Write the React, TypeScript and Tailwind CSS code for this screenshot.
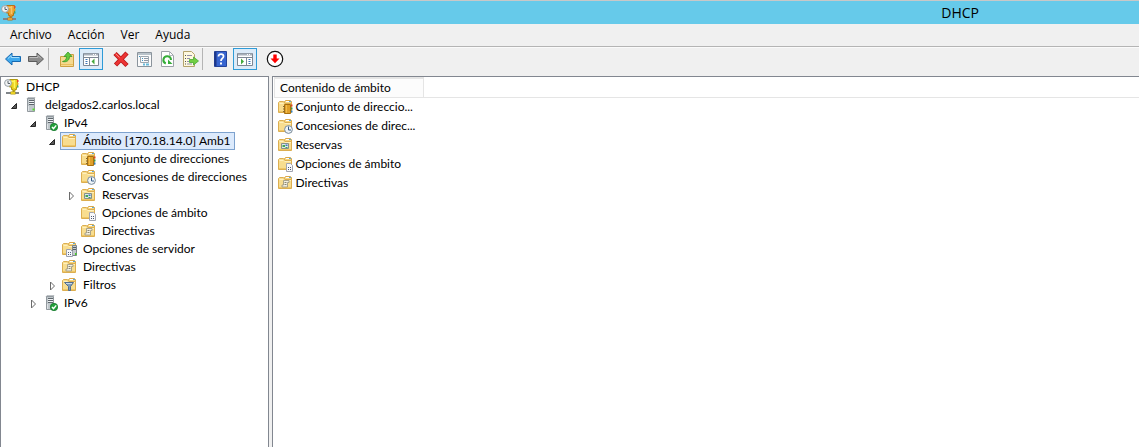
import React from "react";

type IconName =
  | "app" | "dhcp" | "server" | "serverOk" | "folder" | "pool" | "leases"
  | "reservations" | "options" | "policies" | "serverOptions" | "filters";

function FolderBase() {
  return (
    <>
      <path d="M7.500 3.500v-1l1-1h5l1 1V6h-7z" fill="#f6d580" stroke="#dba94a" />
      <path d="M9 2.500h3" stroke="#fff" />
      <path d="M12 2.500h2" stroke="#5aa7d8" />
      <path d="M1.500 3.500 2.500 2.500h4l1.500 2h6.500v9h-13z" fill="#f8dd8f" stroke="#dcae50" />
      <path d="M2.500 4.500h4M7.500 5.500h6.500" stroke="#fff0bd" />
      <path d="M2 12.500h12" stroke="#efc766" />
    </>
  );
}

function ServerBase() {
  return (
    <>
      <path d="M4 1.500 5 .5h7l-1 1z" fill="#e4e8ea" stroke="#9aa1a6" strokeWidth=".6" />
      <path d="M4.500 1.500h7v13h-7z" fill="#c0c7cb" stroke="#92999e" />
      <path d="M6 3.500h5M6 5.500h5M6 7.500h5" stroke="#5d656b" />
      <path d="M6 4.500h5M6 6.500h5" stroke="#eef1f3" />
      <path d="M5.500 9v5" stroke="#dfe3e6" />
      <path d="M9.500 12.500h2" stroke="#54e02c" strokeWidth="2" />
    </>
  );
}

function NetworkServer({ body, edge, shine }: { body: string; edge: string; shine: string }) {
  return (
    <>
      <path d="M5.500 .5h8v7.500h-1v2.500h-1.500v1.500h-2v-1.500h-1.500v-2.500h-2z" fill={body} stroke={edge} />
      <path d="M7 2.500h4M10.500 1v8" stroke={shine} strokeWidth="1.500" />
      <path d="M13 2h1.500" stroke="#e8452c" strokeWidth="2" />
      <path d="M13 4.700h1.500" stroke="#e8a41c" strokeWidth="2" />
      <path d="M13 7.400h1.500" stroke="#4aa564" strokeWidth="2" />
      <circle cx="4" cy="4" r="3.400" fill="#f1f3f4" stroke="#98a0a6" />
      <path d="M4 1.800V4.500h2" stroke="#59636b" />
      <path d="M9.500 11.500v2" stroke={edge} strokeWidth="2" />
      <path d="M2 14h13" stroke="#808589" strokeWidth="2" />
      <path d="M6.500 14h5" stroke={edge} strokeWidth="3" />
      <path d="M7 14h4" stroke={body} strokeWidth="2" />
    </>
  );
}

function Glyph({ name }: { name: IconName }) {
  const plain = ["app", "dhcp", "server", "serverOk"].includes(name);
  return (
    <svg viewBox="0 0 16 16" className="size-4 shrink-0" fill="none" aria-hidden="true">
      {name === "app" && <NetworkServer body="#e9a032" edge="#b87414" shine="#f7c568" />}
      {name === "dhcp" && <NetworkServer body="#e9d022" edge="#b09a10" shine="#fff75a" />}
      {(name === "server" || name === "serverOk") && <ServerBase />}
      {name === "serverOk" && (
        <>
          <circle cx="12" cy="12" r="3.700" fill="#22a03a" stroke="#137328" strokeWidth=".7" />
          <path d="m10 12 1.500 1.600 2.700-3.200" stroke="#fff" strokeWidth="1.400" />
        </>
      )}
      {!plain && <FolderBase />}
      {name === "pool" && (
        <>
          <path d="M7.500 5.500h6v9h-6z" fill="#e0a02a" stroke="#a8700f" />
          <path d="M9.500 6v8" stroke="#f2bd4c" />
          <path d="M6 7.500h2M6 10h2M6 12.500h2" stroke="#8a6a2c" />
          <path d="M14 6.500h1.500" stroke="#e04328" strokeWidth="2" />
          <path d="M14 9.500h1.500" stroke="#3a9a48" strokeWidth="2" />
          <path d="M14 12.500h1.500" stroke="#2e80c4" strokeWidth="2" />
        </>
      )}
      {name === "leases" && (
        <>
          <circle cx="11.500" cy="11.500" r="3.900" fill="#eef4f8" stroke="#7b8b99" />
          <path d="M11.500 8.500v3.500h2.500" stroke="#345a86" />
        </>
      )}
      {name === "reservations" && (
        <>
          <path d="M4.500 6.500h7v5h-7z" fill="#dfe8ea" stroke="#85908c" />
          <path d="M5.500 8h2.500v2H5.500z" fill="#42a852" />
          <path d="M8.500 7.500h2v1.500h-2z" fill="#3976c0" />
          <path d="M8.500 10.500h2" stroke="#42a852" />
        </>
      )}
      {name === "options" && (
        <>
          <path d="M9.500 7.500h4l2 2v6h-6z" fill="#f8f8fa" stroke="#a2a5b0" />
          <path d="M11 11.500h1M13 11.500h1M11 13.500h1M13 13.500h1" stroke="#4d5774" />
        </>
      )}
      {name === "policies" && (
        <>
          <path d="M6.500 5.500h5.500v2h-1.500v4.500H5v-2h1.500z" fill="#f3efdf" stroke="#a29b83" strokeWidth=".9" />
          <path d="M7.500 7.500h2M7.500 9.500h2" stroke="#8b8673" />
        </>
      )}
      {name === "serverOptions" && (
        <>
          <path d="M11.500 4.500h4v10h-4z" fill="#c4cacd" stroke="#7d868c" />
          <path d="M12 6.500h3M12 8.500h3" stroke="#566067" />
          <path d="M14 13h1.500" stroke="#4cce2d" strokeWidth="2" />
          <path d="M5.500 8.500h4l2 2v5h-6z" fill="#f7f8fb" stroke="#9aa0ae" />
          <path d="M7 11.500h1M9 11.500h1M7 13.500h1M9 13.500h1" stroke="#53617e" />
        </>
      )}
      {name === "filters" && (
        <>
          <path d="M3.500 5.500h9L9.500 9.500v4h-2v-4z" fill="#7f9dba" stroke="#536f8e" />
          <path d="M5 6.500h6" stroke="#c8d8e6" />
        </>
      )}
    </svg>
  );
}

type Node = { label: string; icon: IconName; open?: boolean; selected?: boolean; children?: Node[] };

const scope: Node[] = [
  { label: "Conjunto de direcciones", icon: "pool" },
  { label: "Concesiones de direcciones", icon: "leases" },
  { label: "Reservas", icon: "reservations", open: false },
  { label: "Opciones de ámbito", icon: "options" },
  { label: "Directivas", icon: "policies" },
];

const tree: Node[] = [
  {
    label: "delgados2.carlos.local", icon: "server", open: true,
    children: [
      {
        label: "IPv4", icon: "serverOk", open: true,
        children: [
          { label: "Ámbito [170.18.14.0] Amb1", icon: "folder", open: true, selected: true, children: scope },
          { label: "Opciones de servidor", icon: "serverOptions" },
          { label: "Directivas", icon: "policies" },
          { label: "Filtros", icon: "filters", open: false },
        ],
      },
      { label: "IPv6", icon: "serverOk", open: false },
    ],
  },
];

const contents = [
  { label: "Conjunto de direccio...", icon: "pool" },
  { label: "Concesiones de direc...", icon: "leases" },
  { label: "Reservas", icon: "reservations" },
  { label: "Opciones de ámbito", icon: "options" },
  { label: "Directivas", icon: "policies" },
] satisfies { label: string; icon: IconName }[];

function Expander({ open }: { open: boolean }) {
  return (
    <button type="button" aria-label={open ? "Contraer" : "Expandir"} className="size-3 shrink-0">
      <svg viewBox="0 0 12 12" className="size-3" aria-hidden="true">
        {open ? (
          <path d="M8.500 4.500v5h-5z" fill="#595959" stroke="#262626" />
        ) : (
          <path d="M4.500 3v8l4-4z" fill="#fff" stroke="#6b6b6b" />
        )}
      </svg>
    </button>
  );
}

function Branch({ nodes }: { nodes: Node[] }) {
  return (
    <ul role="group">
      {nodes.map((n) => (
        <li key={n.label} role="treeitem" aria-expanded={n.open} aria-selected={!!n.selected}>
          <div className="flex h-[18px] items-center gap-[2px]">
            <div className="flex w-3 shrink-0">{n.open !== undefined && <Expander open={n.open} />}</div>
            <div
              className={
                n.selected
                  ? "flex h-[18px] items-center gap-[6px] border border-[#7da2ce] bg-[#dceafc] pr-[3px] whitespace-nowrap"
                  : "flex h-[18px] items-center gap-[6px] border border-transparent pr-[3px] whitespace-nowrap"
              }
            >
              <Glyph name={n.icon} />
              <span>{n.label}</span>
            </div>
          </div>
          {n.children && (
            <div className="pl-[19px]">
              <Branch nodes={n.children} />
            </div>
          )}
        </li>
      ))}
    </ul>
  );
}

function Tool({ label, pressed, wide, children }: { label: string; pressed?: boolean; wide?: boolean; children: React.ReactNode }) {
  return (
    <button
      type="button"
      aria-label={label}
      aria-pressed={pressed}
      className={
        pressed
          ? "flex h-[22px] w-6 items-center justify-center border border-[#2f9bd7] bg-[#dcebf8]"
          : wide
            ? "flex h-[22px] w-6 items-center justify-center"
            : "flex h-[22px] w-[23px] items-center justify-center"
      }
    >
      <svg viewBox="0 0 18 18" className="size-[18px] shrink-0" fill="none" aria-hidden="true">
        {children}
      </svg>
    </button>
  );
}

function Separator() {
  return <div className="h-[22px] w-px bg-[#b4b4b4]" />;
}

export default function App() {
  return (
    <div className="flex min-h-screen flex-col bg-[#f0f0f0] font-['Open_Sans','Noto_Sans',sans-serif] text-[12px] leading-[18px] text-black">
      <header className="flex h-6 items-center border-t border-[#c8c8c8] bg-[#66caea] pl-px">
        <Glyph name="app" />
        <h1 className="ml-auto pr-40 text-[14px]">DHCP</h1>
      </header>

      <nav aria-label="Menú" className="flex h-[23px] items-center gap-4 border-b border-[#b4b4b4] px-[10px]">
        <button type="button">Archivo</button>
        <button type="button">Acción</button>
        <button type="button">Ver</button>
        <button type="button">Ayuda</button>
      </nav>

      <div role="toolbar" aria-label="Herramientas" className="flex h-[29px] items-center border-t border-[#fafafa] pb-[6px] pl-px">
        <Tool label="Atrás">
          <path d="M1.500 9 8 3v3.500h8.500v5H8V15z" fill="#3fa9ee" stroke="#1769b0" strokeLinejoin="round" />
          <path d="M4 8.500 7.200 5.500v2h8" stroke="#a5defb" />
        </Tool>
        <Tool label="Adelante">
          <path d="M16.500 9 10 3v3.500H1.500v5H10V15z" fill="#8c8c8c" stroke="#5c5c5c" strokeLinejoin="round" />
          <path d="M2.500 7.500H11v-2l3 3" stroke="#bdbdbd" />
        </Tool>
        <div className="pl-px pr-[6px]"><Separator /></div>
        <Tool label="Subir un nivel" wide>
          <path d="M2.500 6.500h5l1-2h7v12h-13z" fill="#f5d98e" stroke="#cda043" />
          <path d="M3 14.500h12" stroke="#eabf5f" />
          <path d="M4.500 11.500c3-.5 4-2.500 4-5H6L10 2l4 4.500h-2.500c0 4-3 6-7 5z" fill="#62c83c" stroke="#36992a" strokeWidth=".8" />
        </Tool>
        <Tool label="Mostrar u ocultar árbol de consola" pressed>
          <path d="M1.500 3.500h15v12h-15z" fill="#fff" stroke="#7d8794" />
          <path d="M2 4.500h14" stroke="#a8b0ba" strokeWidth="2" />
          <path d="M11 4.500h1M13 4.500h1" stroke="#fff" />
          <path d="M2 7.500h14M7.500 8v7" stroke="#7d8794" />
          <path d="M3.500 9.500h2M3.500 11.500h2M3.500 13.500h2" stroke="#3d75b4" />
          <path d="M12.500 8.500v6L9.500 11.500z" fill="#44aa3e" />
        </Tool>
        <div className="w-[6px]" />
        <Tool label="Eliminar">
          <path d="m3 3.500 12 12M15 3 3.500 15" stroke="#b91c1c" strokeWidth="4.500" />
          <path d="m3.500 4 11 11M14.500 3.500 4 14.500" stroke="#ed3434" strokeWidth="2.800" />
          <path d="m3.500 3.500 4 4" stroke="#ff8a80" />
        </Tool>
        <Tool label="Propiedades">
          <path d="M2.500 2.500h14v14h-14z" fill="#fbfbfb" stroke="#8b949c" />
          <path d="M3 4h13" stroke="#b9c3ca" strokeWidth="2" />
          <path d="M5.500 6.500h8v6h-8z" stroke="#9ca7b0" />
          <path d="M4 6.500h1M7 8.500h1M7 10.500h1" stroke="#3a95c5" />
          <path d="M9 8.500h4M9 10.500h4" stroke="#8d98a5" />
          <path d="M8 14.500h2M11 14.500h3" stroke="#67bad9" strokeWidth="2" />
        </Tool>
        <Tool label="Actualizar">
          <path d="M3.500 1.500h8l4 4v11h-12z" fill="#fff" stroke="#9ba1a7" />
          <path d="M11.500 1.500v4h4" stroke="#b4b9be" />
          <path d="M7.800 13.500A3.800 3.800 0 1 1 13 10" stroke="#36ad38" strokeWidth="2" />
          <path d="M10 9.500v4.500h4.500z" fill="#36ad38" />
        </Tool>
        <Tool label="Exportar lista">
          <path d="M2.500 1.500h8l3 3v12h-11z" fill="#fff9df" stroke="#b4a36c" />
          <path d="M4 5.500h1M4 8.500h1M4 11.500h1M4 14h1" stroke="#555" />
          <path d="M6 5.500h5M6 8.500h3M6 11.500h2M6 14h5" stroke="#9390aa" />
          <path d="M8.500 9.500h4v-2.500l5 4-5 4v-2.500h-4z" fill="#72cf43" stroke="#47a932" strokeWidth=".8" />
        </Tool>
        <div className="pl-px pr-[6px]"><Separator /></div>
        <Tool label="Ayuda" wide>
          <path d="M2.500 1.500h12v15h-12z" fill="#3765d0" stroke="#24439a" />
          <path d="M3.500 2v14" stroke="#1d3788" strokeWidth="2" />
          <path d="M6.500 6.500c0-3.500 5.500-3 5 0-.2 2-2.500 2-2.500 4.500" stroke="#fff" strokeWidth="1.800" />
          <path d="M8 12.500h2v2H8z" fill="#fff" />
        </Tool>
        <Tool label="Mostrar u ocultar panel de acciones" pressed>
          <path d="M1.500 3.500h15v12h-15z" fill="#fff" stroke="#7d8794" />
          <path d="M2 4.500h14" stroke="#a8b0ba" strokeWidth="2" />
          <path d="M11 4.500h1M13 4.500h1" stroke="#fff" />
          <path d="M2 7.500h14M10.500 8v7" stroke="#7d8794" />
          <path d="M12.500 9.500h2M12.500 11.500h2M12.500 13.500h2" stroke="#3d75b4" />
          <path d="M5 8.500v6l3-3z" fill="#44aa3e" />
        </Tool>
        <div className="w-[6px]" />
        <Tool label="Desactivar" wide>
          <circle cx="9" cy="9" r="7.700" fill="#fff" stroke="#111" strokeWidth="1.200" />
          <path d="M7.300 4.500h3.400v4H13.500L9 13.300 4.500 8.500h2.800z" fill="#f00" />
        </Tool>
      </div>

      <main className="flex flex-1 font-['Lato','Open_Sans',sans-serif]">
        <section aria-label="Árbol de consola" className="w-[269px] shrink-0 border border-b-0 border-[#828790] bg-white">
          <div role="tree" aria-label="Consola">
            <div className="flex h-[18px] items-center gap-[6px] pl-[3px] pt-px">
              <Glyph name="dhcp" />
              <span>DHCP</span>
            </div>
            <div className="pt-px pl-[7px]">
              <Branch nodes={tree} />
            </div>
          </div>
        </section>
        <section aria-label="Contenido" className="ml-[3px] flex-1 border-t border-l border-[#828790] bg-white pl-px">
          <table className="w-full table-fixed border-collapse">
            <thead>
              <tr className="h-[19px]">
                <th scope="col" className="w-[149px] border border-t-2 border-[#e5e5e5] bg-[#fcfcfc] p-0 pl-[5px] text-left font-normal whitespace-nowrap">
                  Contenido de ámbito
                </th>
                <td className="border-b border-[#e5e5e5]" />
              </tr>
            </thead>
            <tbody>
              {contents.map((c) => (
                <tr key={c.label} className="h-[19px]">
                  <td className="p-0 pl-[2px]">
                    <div className="flex items-center gap-[3px] whitespace-nowrap">
                      <Glyph name={c.icon} />
                      <span>{c.label}</span>
                    </div>
                  </td>
                  <td />
                </tr>
              ))}
            </tbody>
          </table>
        </section>
      </main>
    </div>
  );
}
